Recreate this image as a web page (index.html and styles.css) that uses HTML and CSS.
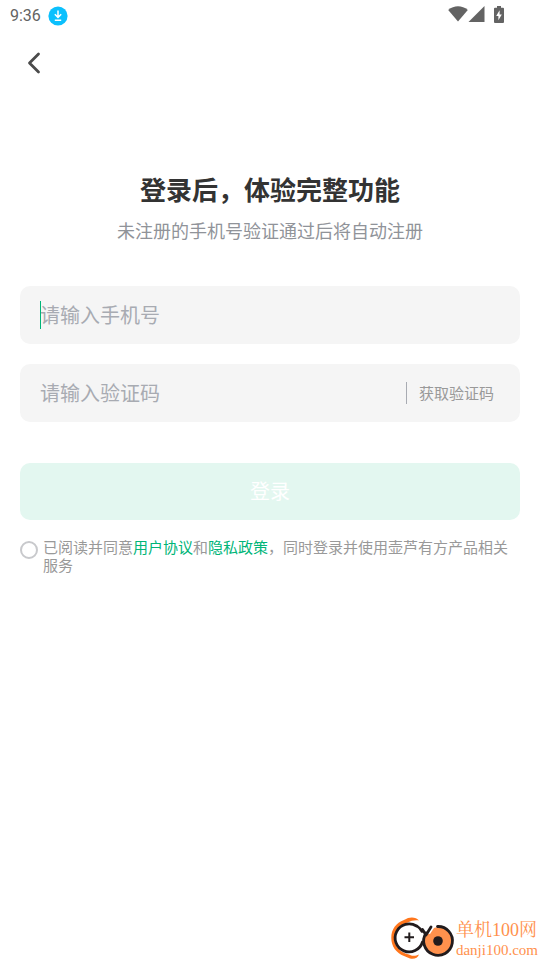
FILE: index.html
```html
<!DOCTYPE html>
<html lang="zh-CN">
<head>
<meta charset="utf-8">
<meta name="viewport" content="width=device-width, initial-scale=1">
<title>登录</title>
<link rel="stylesheet" href="styles.css">
</head>
<body>
<header class="status">
  <span class="status-time">9:36</span>
  <svg class="status-download" viewBox="0 0 20 20" aria-hidden="true">
    <circle cx="10" cy="10" r="9.6" fill="#0bc0fd"/>
    <path d="M10 4.500v6.500M6.800 8.200l3.200 3.200 3.200-3.200M6.800 14.300h6.400" fill="none" stroke="#fff" stroke-width="1.500"/>
  </svg>
  <span class="status-icons">
    <svg width="20" height="16" viewBox="0 0 20 16" aria-hidden="true"><path d="M.2 4C6-.9 14-.9 19.800 4L10 15.600Z" fill="#636363"/></svg>
    <svg width="17" height="16" viewBox="0 0 17 16" aria-hidden="true"><path d="M16.500 0v16H.5Z" fill="#636363"/></svg>
    <svg class="status-battery" width="10" height="17" viewBox="0 0 10 17" aria-hidden="true">
      <path d="M3 0h4v1.700h2Q10 1.700 10 2.700V16q0 1-1 1H1q-1 0-1-1V2.700q0-1 1-1h2Z" fill="#636363"/>
      <path d="M5.600 4.200 2.200 10h2.200v4.300L7.800 8.500H5.600Z" fill="#fff"/>
    </svg>
  </span>
</header>
<nav class="nav">
  <button class="back" type="button" aria-label="返回">
    <svg width="14" height="22" viewBox="0 0 14 22" aria-hidden="true"><path d="M11.500 2 2.500 11l9 9" fill="none" stroke="#4b4b4b" stroke-width="2.800" stroke-linecap="round" stroke-linejoin="round"/></svg>
  </button>
</nav>
<main class="login">
  <h1 class="title">登录后，体验完整功能</h1>
  <p class="subtitle">未注册的手机号验证通过后将自动注册</p>
  <form class="form">
    <div class="field">
      <input class="field-input" type="tel" placeholder="请输入手机号" aria-label="手机号">
      <span class="caret"></span>
    </div>
    <div class="field">
      <input class="field-input" type="text" placeholder="请输入验证码" aria-label="验证码">
      <button class="code" type="button">获取验证码</button>
    </div>
    <button class="submit" type="submit">登录</button>
    <div class="agree">
      <input class="agree-box" type="checkbox" id="agree">
      <label class="agree-text" for="agree">已阅读并同意<a href="#terms">用户协议</a>和<a href="#privacy">隐私政策</a>，同时登录并使用壶芦有方产品相关服务</label>
    </div>
  </form>
</main>
<footer class="brand">
  <svg class="brand-logo" width="64" height="44" viewBox="0 0 64 44" aria-hidden="true">
    <path d="M28 4.500C23 4 20 5 17 6.500C9 8 3.500 14 3.500 22C3.500 31 10 37 18 38.500C21 40.500 25 40 28 38.500C27 42 23 43.500 19 42.500L13 40C5 37 .3 30 .3 22C.3 13 5 7 13 4C19 0 25 1 28 4.500Z" fill="#ff761c"/>
    <path d="M25.500 10A14 14 0 1 0 31.500 26" fill="#fff" stroke="#211b1d" stroke-width="2.800" stroke-linecap="round"/>
    <path d="M26 10Q29 12 31 15.500" fill="none" stroke="#211b1d" stroke-width="2.600" stroke-linecap="round"/>
    <circle cx="47.200" cy="25" r="13.800" fill="#ff914d"/>
    <path d="M45 8h-9l-3 9 6 1 4-6Z" fill="#fff"/>
    <path d="M31.500 13.500L35 19L40 11M35 17A14.400 14.400 0 1 0 46.500 10.500" fill="none" stroke="#211b1d" stroke-width="2.800" stroke-linecap="round" stroke-linejoin="round"/>
    <circle cx="47" cy="25" r="4.800" fill="#211b1d"/>
    <path d="M18.300 16.500v9.500M13.500 21.300h9.500" stroke="#211b1d" stroke-width="2"/>
  </svg>
  <div class="brand-text">
    <span class="brand-name">单机100网</span>
    <span class="brand-site">danji100.com</span>
  </div>
</footer>
</body>
</html>
```

FILE: styles.css
```css
* {
  box-sizing: border-box;
}

body {
  margin: 0;
  min-height: 100vh;
  display: flex;
  flex-direction: column;
  background: #fff;
  color: #333;
  font-family: "Noto Sans CJK SC", sans-serif;
}

button,
input {
  margin: 0;
  padding: 0;
  border: 0;
  background: none;
  font: inherit;
}

svg {
  display: block;
}

.status {
  display: flex;
  align-items: center;
  height: 32px;
  padding: 0 36px 0 10px;
}

.status-time {
  color: #636363;
  font: 400 16px/20px Roboto, sans-serif;
}

.status-download {
  width: 20px;
  height: 20px;
  margin-left: 7px;
}

.status-icons {
  display: flex;
  align-items: center;
  margin-left: auto;
  height: 28px;
  align-self: flex-start;
}

.status-battery {
  margin-left: 9px;
}

.nav {
  padding: 10px 14px;
}

.back {
  display: grid;
  place-items: center;
  width: 40px;
  height: 42px;
}

.login {
  flex: 1;
  padding: 76px 20px 0;
}

.title {
  margin: 0;
  font-size: 26px;
  line-height: 38px;
  font-weight: 700;
  text-align: center;
}

.subtitle {
  margin: 9px 0 0;
  color: #909399;
  font-size: 18px;
  line-height: 26px;
  text-align: center;
}

.form {
  margin-top: 43px;
}

.field {
  position: relative;
  display: flex;
  align-items: center;
  height: 58px;
  margin-bottom: 20px;
  padding: 0 26px 0 20px;
  border-radius: 10px;
  background: #f5f5f5;
}

.field-input {
  flex: 1;
  min-width: 0;
  height: 100%;
  padding-bottom: 2px;
  outline: none;
  font-size: 20px;
}

.field-input::placeholder {
  color: #a8abb2;
  opacity: 1;
}

.caret {
  position: absolute;
  left: 20px;
  top: 15px;
  width: 1px;
  height: 28px;
  background: #00b578;
}

.code {
  padding-left: 12px;
  border-left: 1px solid #a8abb2;
  color: #999;
  font-size: 15px;
  line-height: 22px;
}

.submit {
  width: 100%;
  height: 57px;
  margin-top: 21px;
  padding-bottom: 2px;
  border-radius: 10px;
  background: #e3f7f0;
  color: #fff;
  font-size: 20px;
}

.agree {
  display: flex;
  align-items: flex-start;
  gap: 5px;
  margin-top: 18px;
}

.agree-box {
  appearance: none;
  flex: none;
  width: 18px;
  height: 18px;
  margin-top: 3px;
  border: 2px solid #c8c9cc;
  border-radius: 50%;
  background: #fff;
}

.agree-text {
  color: #999;
  font-size: 15px;
  line-height: 18px;
}

.agree-text a {
  color: #00b578;
  text-decoration: none;
}

.brand {
  display: flex;
  justify-content: flex-end;
  gap: 1px;
  padding-right: 2px;
}

.brand-text {
  display: flex;
  flex-direction: column;
  justify-content: flex-end;
  color: #ff914d;
  font-family: "Liberation Serif", "Noto Serif CJK SC", "Noto Sans CJK SC", serif;
}

.brand-name {
  font-size: 18px;
  line-height: 20px;
}

.brand-site {
  font-size: 15px;
  line-height: 20px;
}
```
